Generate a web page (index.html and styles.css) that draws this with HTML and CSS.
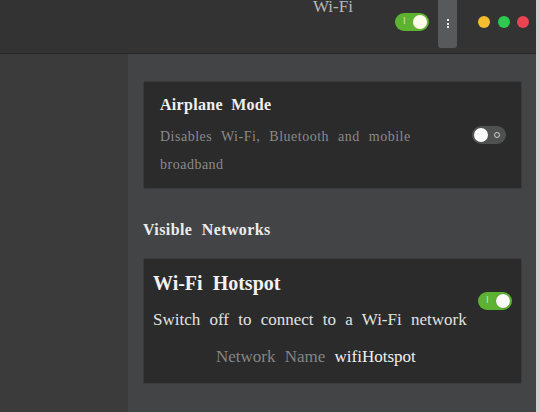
FILE: index.html
```html
<!DOCTYPE html>
<html lang="en">

<head>
  <meta charset="UTF-8">
  <meta name="viewport" content="width=device-width, initial-scale=1.0">
  <title>Wi-Fi</title>
  <link rel="stylesheet" href="styles.css">
</head>

<body>
  <div class="window">
    <div class="header">
      <div class="header-side"></div>
      <div class="header-main">
        <div class="title">Wi-Fi</div>
        <div class="switch on small"><span class="mark">I</span><span class="knob"></span></div>
        <div class="menu-btn">
          <span class="dot"></span>
          <span class="dot"></span>
          <span class="dot"></span>
        </div>
        <div class="lights">
          <span class="light yellow"></span>
          <span class="light green"></span>
          <span class="light red"></span>
        </div>
      </div>
    </div>
    <div class="body">
      <div class="sidebar"></div>
      <div class="content">
        <div class="card airplane">
          <div class="card-text">
            <div class="card-title">Airplane Mode</div>
            <div class="card-desc">Disables Wi-Fi, Bluetooth and mobile broadband</div>
          </div>
          <div class="switch off"><span class="knob"></span><span class="ring"></span></div>
        </div>

        <div class="section-title">Visible Networks</div>

        <div class="card hotspot">
          <div class="hotspot-row">
            <div class="card-text">
              <div class="hotspot-title">Wi-Fi Hotspot</div>
              <div class="hotspot-desc">Switch off to connect to a Wi-Fi network</div>
            </div>
            <div class="switch on"><span class="mark">I</span><span class="knob"></span></div>
          </div>
          <div class="network-name">Network Name <span class="value">wifiHotspot</span></div>
        </div>
      </div>
    </div>
  </div>
</body>

</html>
```

FILE: styles.css
```css
body {
  margin: 0;
  background: #cfd0d0;
  font-family: "Liberation Serif", serif;
}

.window {
  width: 536px;
  height: 412px;
  display: flex;
  flex-direction: column;
  background: #434445;
  overflow: hidden;
}

.header {
  height: 53px;
  display: flex;
  background: #333334;
  border-bottom: 1px solid #262626;
  flex-shrink: 0;
}

.header-side {
  width: 128px;
}

.header-main {
  flex: 1;
  display: flex;
  align-items: flex-start;
}

.title {
  margin-left: 185px;
  width: 40px;
  font-size: 17px;
  line-height: 13px;
  color: #b8b8b8;
  white-space: nowrap;
}

.switch {
  position: relative;
  width: 34px;
  height: 18px;
  border-radius: 9px;
  flex-shrink: 0;
}

.switch .knob {
  position: absolute;
  top: 2px;
  width: 14px;
  height: 14px;
  border-radius: 50%;
  background: #fafafa;
}

.switch.on {
  background: #5db232;
}

.switch.on .knob {
  right: 2px;
  box-shadow: 0 0 1px #3a6e1f;
}

.switch.on .mark {
  position: absolute;
  left: 8px;
  top: 3px;
  font-family: "DejaVu Sans", sans-serif;
  font-size: 9px;
  color: #c9e8b6;
}

.switch.off {
  background: #4f5050;
}

.switch.off .knob {
  left: 2px;
}

.switch.off .ring {
  position: absolute;
  right: 6px;
  top: 6px;
  width: 4px;
  height: 4px;
  border: 1.5px solid #cfcfcf;
  border-radius: 50%;
}

.switch.small {
  margin-top: 13px;
  margin-left: 42px;
}

.switch.small .knob {
  background: #fbfbea;
  box-shadow: 0 0 1px #a4b84a;
}

.menu-btn {
  margin-left: 9px;
  width: 19px;
  height: 48px;
  background: #58595b;
  border-radius: 0 0 3px 3px;
  display: flex;
  flex-direction: column;
  align-items: center;
  padding-top: 19px;
  box-sizing: border-box;
  gap: 1.5px;
}

.dot {
  width: 2px;
  height: 2px;
  background: #e8e8e8;
}

.lights {
  display: flex;
  gap: 7.5px;
  margin-left: 21px;
  margin-top: 16px;
}

.light {
  width: 12px;
  height: 12px;
  border-radius: 50%;
}

.yellow {
  background: #f4bd2f;
}

.green {
  background: #2ec94f;
}

.red {
  background: #ea4352;
}

.body {
  flex: 1;
  display: flex;
}

.sidebar {
  width: 128px;
  background: #3b3b3b;
}

.content {
  flex: 1;
  padding: 27px 14px 0 15px;
}

.card {
  background: #2b2b2b;
  border: 1px solid #3b3b3b;
  border-radius: 2px;
}

.airplane {
  height: 93px;
  display: flex;
  padding: 13px 15px 0 16px;
}

.card-text {
  flex: 1;
}

.airplane .switch {
  align-self: center;
  margin-top: -13px;
}

.card-title {
  font-size: 16px;
  line-height: 20px;
  font-weight: bold;
  color: #f0f0f0;
  letter-spacing: 0.3px;
  word-spacing: 4px;
}

.card-desc {
  margin-top: 8px;
  width: 270px;
  font-size: 14px;
  line-height: 28px;
  color: #8a8a8a;
  letter-spacing: 0.5px;
  word-spacing: 5px;
}

.section-title {
  margin-top: 31px;
  font-size: 16px;
  line-height: 20px;
  font-weight: bold;
  color: #ececec;
  letter-spacing: 0.4px;
  word-spacing: 5px;
}

.hotspot {
  margin-top: 18px;
  height: 112px;
  padding: 12px 9px 0 9px;
}

.hotspot-row {
  display: flex;
  align-items: center;
}

.hotspot-title {
  font-size: 20px;
  line-height: 24px;
  font-weight: bold;
  color: #f2f2f2;
  word-spacing: 5px;
}

.hotspot-desc {
  margin-top: 14px;
  font-size: 17px;
  line-height: 22px;
  color: #e2e2e2;
  word-spacing: 5px;
}

.network-name {
  margin-top: 15px;
  margin-left: 63px;
  font-size: 17px;
  line-height: 22px;
  color: #858585;
  word-spacing: 5px;
}

.network-name .value {
  color: #f0f0f0;
}
```
